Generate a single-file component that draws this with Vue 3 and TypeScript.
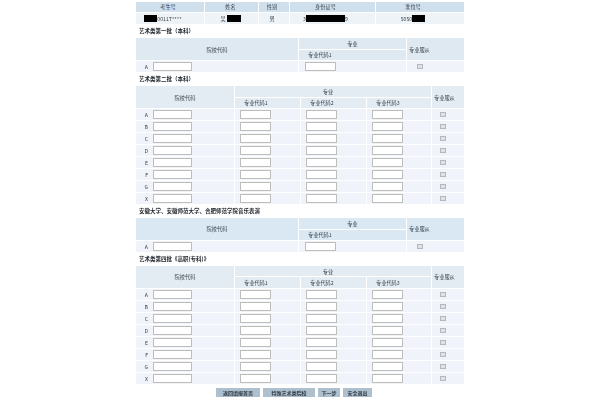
<script setup lang="ts">
interface Section {
  title: string
  tone: string
  kind: 'single' | 'triple'
  letters: string[]
}
const all = ['A', 'B', 'C', 'D', 'E', 'F', 'G', 'X']
const sections: Section[] = [
  { title: '艺术类第一批（本科）', tone: 'tone-a', kind: 'single', letters: ['A'] },
  { title: '艺术类第二批（本科）', tone: 'tone-b', kind: 'triple', letters: all },
  { title: '安徽大学、安徽师范大学、合肥师范学院音乐表演', tone: 'tone-c', kind: 'single', letters: ['A'] },
  { title: '艺术类第四批《高职(专科)》', tone: 'tone-b', kind: 'triple', letters: all },
]
const buttons = [
  { label: '返回填报首页', cls: 'b1' },
  { label: '特殊艺术类院校', cls: 'b2' },
  { label: '下一步', cls: 'b3' },
  { label: '安全退出', cls: 'b4' },
]
</script>

<template>
  <div class="page">
    <div class="info">
      <div class="head c1">考生号</div>
      <div class="head c2">姓名</div>
      <div class="head c3">性别</div>
      <div class="head c4">身份证号</div>
      <div class="head c5">准位号</div>
      <div class="val v1"><span class="mask m1"></span>0011T****</div>
      <div class="val v2">吴<span class="mask m2"></span></div>
      <div class="val v3">男</div>
      <div class="val v4">3<span class="mask m3"></span>9</div>
      <div class="val v5">5050<span class="mask m4"></span></div>
    </div>

    <template v-for="s in sections" :key="s.title">
      <h2 class="title">{{ s.title }}</h2>
      <div class="grid" :class="[s.tone, s.kind]">
        <div class="th school-head">院校代码</div>
        <div class="th major">专业</div>
        <div class="th follow">专业服从</div>
        <div v-for="n in (s.kind === 'single' ? 1 : 3)" :key="'h' + n" class="th sub">专业代码{{ n }}</div>
        <template v-for="l in s.letters" :key="l">
          <div class="td school"><span class="letter">{{ l }}</span><input class="wide" type="text" /></div>
          <div v-for="n in (s.kind === 'single' ? 1 : 3)" :key="l + n" class="td code"><input class="narrow" type="text" /></div>
          <div class="td check"><input type="checkbox" /></div>
        </template>
      </div>
    </template>

    <div class="actions">
      <button v-for="b in buttons" :key="b.label" type="button" :class="b.cls">{{ b.label }}</button>
    </div>
  </div>
</template>

<style scoped>
.page {
  width: 328px;
  margin: 0 auto;
  padding-top: 1.7px;
  font-family: "Noto Sans CJK SC", "Noto Sans", sans-serif;
  font-size: 5.2px;
  line-height: 1;
  color: #333d46;
  filter: blur(0.5px);
}
.info {
  display: grid;
  grid-template-columns: 68px 53px 30px 85px 88px;
  grid-template-rows: 10.5px 11px;
  gap: 1px;
}
.head,
.val,
.th,
.td {
  display: flex;
  align-items: center;
  justify-content: center;
  white-space: nowrap;
  overflow: hidden;
}
.head { background: #cfdfec; }
.val { background: #eef3f8; }
.c1 { padding-right: 4px; }
.c2 { padding-right: 2px; }
.c3 { padding-right: 4px; }
.c4 { padding-right: 14px; }
.c5 { padding-right: 14px; }
.v1 { padding-right: 14px; }
.v2 { padding-right: 2px; }
.v3 { padding-right: 4px; }
.v4 { padding-right: 14px; }
.v5 { padding-right: 14px; }
.mask {
  display: block;
  height: 6.5px;
  background: #000;
}
.m1 { width: 13px; }
.m2 { width: 14px; margin-left: 1px; }
.m3 { width: 39px; }
.m4 { width: 13px; }
.title {
  margin: 0;
  height: 14.3px;
  padding-left: 3px;
  font-size: 5.5px;
  font-weight: 700;
  line-height: 14.3px;
  color: #22282e;
}
.grid {
  display: grid;
  gap: 1px;
  grid-auto-rows: 11px;
}
.single {
  grid-template-columns: 162px 107px 57px;
  grid-template-rows: 10.3px 10.3px;
}
.triple {
  grid-template-columns: 98px 65px 65px 64px 32px;
  grid-template-rows: 10.3px 10.3px;
}
.school-head { grid-row: 1 / span 2; }
.major { grid-column: 2 / -2; }
.follow {
  grid-row: 1 / span 2;
  grid-column: -2 / -1;
  justify-content: flex-start;
  padding-left: 2px;
}
.triple .major { padding-right: 10px; }
.sub {
  justify-content: flex-start;
  padding-left: 9px;
}
.tone-a .th { background: #dfe9f2; }
.tone-b .th { background: #e4ecf3; }
.tone-c .th { background: #d9e8f3; }
.td { background: #f0f4fa; justify-content: flex-start; }
.letter {
  width: 17px;
  padding-right: 5px;
  box-sizing: border-box;
  text-align: right;
}
.code { padding-left: 5px; }
.single .code { padding-left: 6px; }
.check { padding-left: 8px; }
.single .check { padding-left: 10px; }
input[type="text"] {
  display: block;
  box-sizing: border-box;
  height: 8.5px;
  margin: 0;
  padding: 0;
  border: 0.8px solid #bdbdb9;
  border-radius: 0.5px;
  background: #fff;
}
.wide { width: 39px; }
.narrow { width: 31px; }
input[type="checkbox"] {
  appearance: none;
  display: block;
  width: 5.5px;
  height: 5.5px;
  margin: 0;
  border: 0.7px solid #b4b8bc;
  background: #dfe2e5;
}
.actions {
  display: flex;
  gap: 3px;
  margin-top: 4.4px;
  padding-left: 80px;
}
.actions button {
  height: 9px;
  padding: 0;
  border: 0;
  background: #aebfce;
  color: #2f3943;
  font-family: inherit;
  font-size: 5px;
  font-weight: 700;
  line-height: 9px;
}
.b1 { width: 44px; }
.b2 { width: 52px; }
.b3 { width: 22px; }
.b4 { width: 29px; }
</style>

<style>
html, body { background: #fff; overflow: hidden; }
</style>
